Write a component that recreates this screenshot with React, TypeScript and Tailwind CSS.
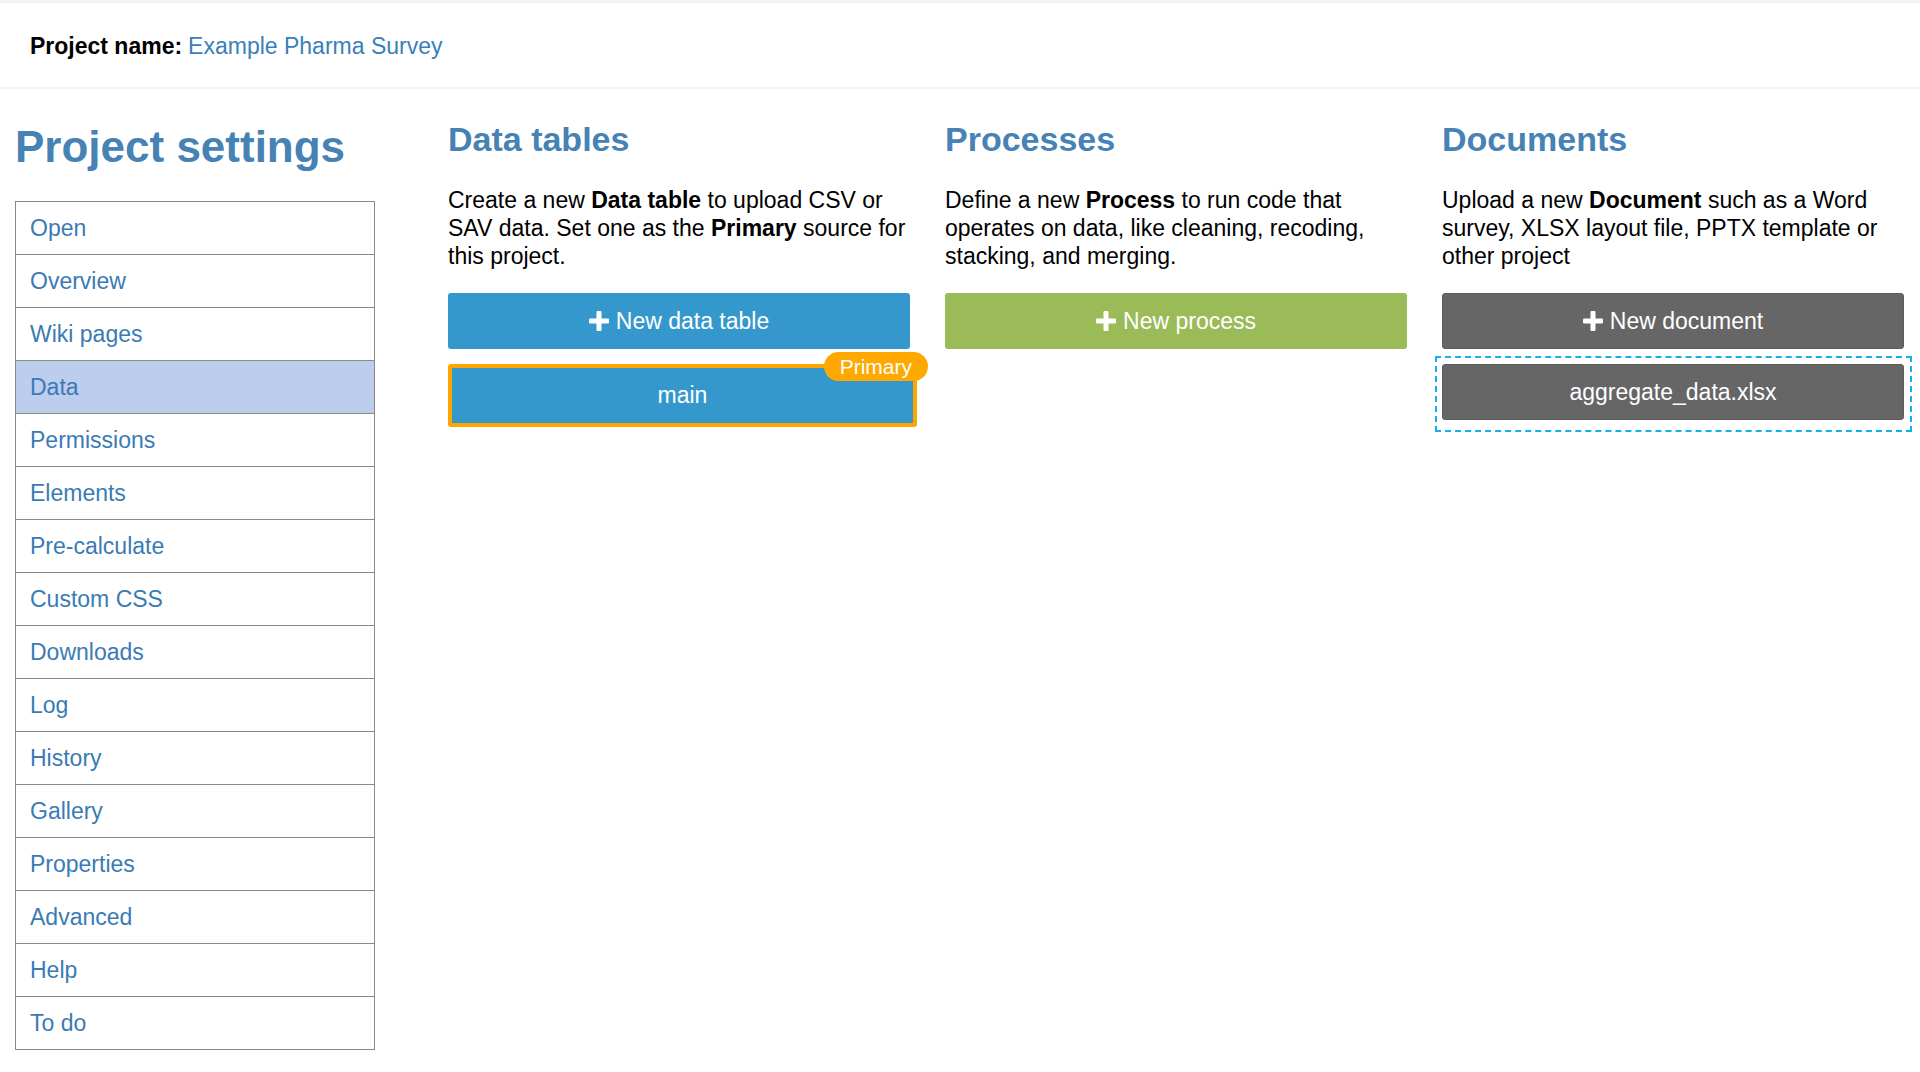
import React from "react";

const FONT = { fontFamily: '"Liberation Sans", Arial, Helvetica, sans-serif' };

function Plus() {
  return (
    <svg width="20" height="20" viewBox="0 0 20 20" className="mr-[7px] shrink-0" aria-hidden="true">
      <rect x="7.5" y="0" width="5" height="20" rx="1" fill="white" />
      <rect x="0" y="7.5" width="20" height="5" rx="1" fill="white" />
    </svg>
  );
}

const navItems = [
  "Open",
  "Overview",
  "Wiki pages",
  "Data",
  "Permissions",
  "Elements",
  "Pre-calculate",
  "Custom CSS",
  "Downloads",
  "Log",
  "History",
  "Gallery",
  "Properties",
  "Advanced",
  "Help",
  "To do",
];

export default function App() {
  return (
    <div className="min-h-[1072px] w-[1920px] bg-white text-black" style={FONT}>
      <div className="h-[3px] bg-[#f2f2f2]" />
      <header className="flex h-[86px] items-center border-b-2 border-[#f2f2f2] pl-[30px] pt-[2px] text-[23px] leading-[28px]">
        <span className="font-bold">Project name:</span>
        <span className="ml-[6px] text-[#3a7fba]">Example Pharma Survey</span>
      </header>

      <main className="flex pl-[15px]">
        <aside className="w-[360px] shrink-0">
          <h1 className="mt-[33px] text-[44px] font-bold leading-[50px] text-[#4682b4]">Project settings</h1>
          <nav className="mt-[29px] border-x border-t border-[#8a8a8a]">
            {navItems.map((item) => (
              <div
                key={item}
                className={`flex h-[53px] items-center border-b border-[#8a8a8a] pl-[14px] text-[23px] text-[#3a7bb5] ${
                  item === "Data" ? "bg-[#bccdee]" : "bg-white"
                }`}
              >
                {item}
              </div>
            ))}
          </nav>
        </aside>

        <section className="ml-[73px] grid grid-cols-[462px_462px_462px] gap-x-[35px]">
          {/* Data tables */}
          <div>
            <h2 className="mt-[31px] text-[34px] font-bold leading-[38px] text-[#4682b4]">Data tables</h2>
            <p className="mt-[28px] h-[84px] text-[23px] leading-[28px]">
              Create a new <b>Data table</b> to upload CSV or SAV data. Set one as the <b>Primary</b> source for this
              project.
            </p>
            <button className="mt-[23px] flex h-[56px] w-full items-center justify-center rounded-[3px] bg-[#3598cd] text-[23px] text-white">
              <Plus />
              New data table
            </button>
            <div className="relative mt-[15px] flex h-[63px] w-[469px] items-center justify-center rounded-[3px] border-[4px] border-[#ffa500] bg-[#3598cd] text-[23px] text-white">
              main
              <span className="absolute right-[-15px] top-[-16px] flex h-[29px] items-center rounded-full bg-[#ffa800] px-[16px] text-[21px] text-white">
                Primary
              </span>
            </div>
          </div>

          {/* Processes */}
          <div>
            <h2 className="mt-[31px] text-[34px] font-bold leading-[38px] text-[#4682b4]">Processes</h2>
            <p className="mt-[28px] h-[84px] text-[23px] leading-[28px]">
              Define a new <b>Process</b> to run code that operates on data, like cleaning, recoding, stacking, and
              merging.
            </p>
            <button className="mt-[23px] flex h-[56px] w-full items-center justify-center rounded-[3px] bg-[#9bbb59] text-[23px] text-white">
              <Plus />
              New process
            </button>
          </div>

          {/* Documents */}
          <div>
            <h2 className="mt-[31px] text-[34px] font-bold leading-[38px] text-[#4682b4]">Documents</h2>
            <p className="mt-[28px] h-[84px] text-[23px] leading-[28px]">
              Upload a new <b>Document</b> such as a Word survey, XLSX layout file, PPTX template or other project
            </p>
            <button className="mt-[23px] flex h-[56px] w-full items-center justify-center rounded-[3px] border border-[#5c5c5c] bg-[#666666] text-[23px] text-white">
              <Plus />
              New document
            </button>
            <div className="ml-[-7px] mr-[-8px] mt-[7px] border-2 border-dashed border-[#14b0ea] pb-[10px] pl-[5px] pr-[6px] pt-[6px]">
              <div className="flex h-[56px] items-center justify-center rounded-[3px] border border-[#5c5c5c] bg-[#666666] text-[23px] text-white">
                aggregate_data.xlsx
              </div>
            </div>
          </div>
        </section>
      </main>
    </div>
  );
}
